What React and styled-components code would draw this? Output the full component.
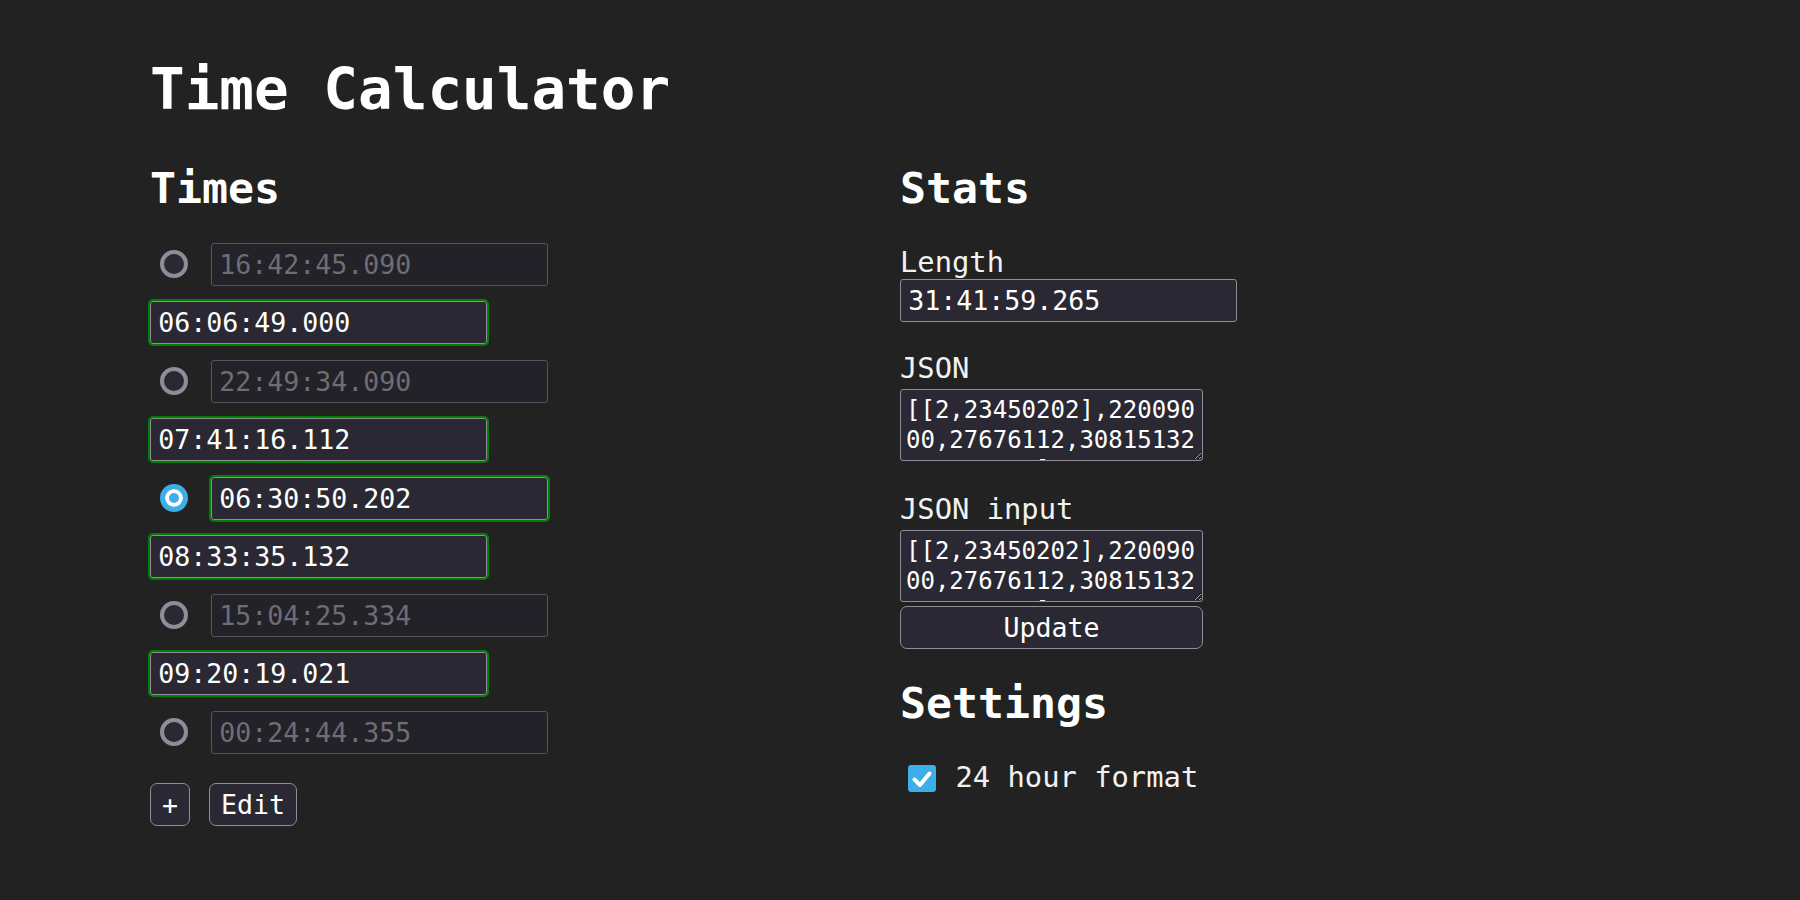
import React from "react";
import styled, { createGlobalStyle } from "styled-components";

// Cores tiradas da tela
const BG = "#222222";
const FIELD_BG = "#2a2933";
const FIELD_BG_OFF = "#232228";
const BORDER = "#8f8d98";
const BORDER_OFF = "#55545c";
const TEXT_OFF = "#6e6d75";
const ACCENT = "#3daee9";

const GlobalStyle = createGlobalStyle`
  html, body {
    margin: 0;
    background: ${BG};
  }
  body {
    font-family: "DejaVu Sans Mono", monospace;
    color: #ffffff;
  }
  * { box-sizing: border-box; }
`;

const Page = styled.main`
  padding: 55.8px 0 0 150px;
  min-height: 900px;
`;

const Title = styled.h1`
  margin: 0;
  font-size: 57.6px;
  line-height: 67px;
  font-weight: bold;
`;

const Columns = styled.div`
  margin-top: 40.4px;
  display: grid;
  grid-template-columns: 750px 1fr;
`;

const Column = styled.section`
  display: flex;
  flex-direction: column;
  align-items: flex-start;
`;

const SectionTitle = styled.h2`
  margin: ${(p) => p.$top || 0}px 0 0;
  font-size: 43.2px;
  line-height: 50px;
  font-weight: bold;
`;

/* ---------- lista de tempos ---------- */

const TimeList = styled.div`
  margin-top: 29.8px;
  display: flex;
  flex-direction: column;
  gap: 15.5px;
`;

const TimeRow = styled.div`
  display: flex;
  align-items: center;
  height: 43px;
`;

const Radio = styled.input.attrs({ type: "radio" })`
  appearance: none;
  margin: 0 23px 0 10px;
  width: 28px;
  height: 28px;
  border-radius: 50%;
  border: 4.5px solid ${BORDER};
  background: ${FIELD_BG};

  &:checked {
    border: 5px solid ${ACCENT};
    background: ${ACCENT};
    box-shadow: inset 0 0 0 4px #ffffff;
  }
`;

const TimeInput = styled.input`
  width: 337px;
  height: 43px;
  padding: 0 5px 0 7.2px;
  border: 1.8px solid ${BORDER};
  border-radius: 3px;
  background: ${FIELD_BG};
  color: #ffffff;
  font-family: "DejaVu Sans Mono", monospace;
  font-size: 26.6px;
  outline: ${(p) => (p.$marked ? "2px solid #008000" : "none")};

  &:disabled {
    border-color: ${BORDER_OFF};
    background: ${FIELD_BG_OFF};
    color: ${TEXT_OFF};
  }
`;

const ButtonRow = styled.div`
  margin-top: 29px;
  display: flex;
  gap: 19px;
`;

const Button = styled.button`
  height: ${(p) => p.$h || 43}px;
  width: ${(p) => (p.$wide ? "303px" : "auto")};
  margin-top: ${(p) => p.$top || 0}px;
  padding: 0 11px;
  border: 1.8px solid ${BORDER};
  border-radius: 7px;
  background: ${FIELD_BG};
  color: #ffffff;
  font-family: "DejaVu Sans Mono", monospace;
  font-size: 26.6px;
`;

/* ---------- stats ---------- */

const Label = styled.label`
  display: block;
  margin-top: ${(p) => p.$top || 0}px;
  font-size: 28.8px;
  line-height: 33px;
  color: #f2f2f2;
`;

const JsonBox = styled.textarea`
  margin-top: ${(p) => p.$top || 0}px;
  width: 303px;
  height: 72px;
  padding: 4.6px 3px 3.6px 5px;
  border: 1.8px solid ${BORDER};
  border-radius: 3px;
  background: ${FIELD_BG};
  color: #ffffff;
  font-family: "DejaVu Sans Mono", monospace;
  font-size: 24px;
  line-height: 30px;
  overflow: hidden;
  resize: both;
  overflow-wrap: anywhere;
  outline: none;
`;

/* ---------- settings ---------- */

const CheckRow = styled.label`
  margin-top: 32.6px;
  display: flex;
  align-items: flex-start;
  gap: 20px;
  font-size: 28.8px;
  line-height: 33px;
  color: #f2f2f2;
`;

const CheckBox = styled.span`
  margin: 4.4px 0 0 8px;
  width: 27.5px;
  height: 27.5px;
  border-radius: 3px;
  background: ${ACCENT};
  display: flex;
  align-items: center;
  justify-content: center;
`;

const times = [
  { value: "16:42:45.090", radio: true },
  { value: "06:06:49.000" },
  { value: "22:49:34.090", radio: true },
  { value: "07:41:16.112" },
  { value: "06:30:50.202", radio: true, checked: true },
  { value: "08:33:35.132" },
  { value: "15:04:25.334", radio: true },
  { value: "09:20:19.021" },
  { value: "00:24:44.355", radio: true },
];

const json = "[[2,23450202],22009000,27676112,30815132,33619021]";

export default function App() {
  return (
    <>
      <GlobalStyle />
      <Page>
        <Title>Time Calculator</Title>
        <Columns>
          <Column>
            <SectionTitle>Times</SectionTitle>
            <TimeList>
              {times.map((t, i) =>
                t.radio ? (
                  <TimeRow key={i}>
                    <Radio name="pick" defaultChecked={t.checked} readOnly />
                    <TimeInput
                      defaultValue={t.value}
                      disabled={!t.checked}
                      $marked={t.checked}
                    />
                  </TimeRow>
                ) : (
                  <TimeRow key={i}>
                    <TimeInput defaultValue={t.value} $marked />
                  </TimeRow>
                )
              )}
            </TimeList>
            <ButtonRow>
              <Button>+</Button>
              <Button>Edit</Button>
            </ButtonRow>
          </Column>

          <Column>
            <SectionTitle>Stats</SectionTitle>
            <Label $top={33.3}>Length</Label>
            <TimeInput defaultValue="31:41:59.265" readOnly />
            <Label $top={30}>JSON</Label>
            <JsonBox $top={3.5} defaultValue={json} readOnly />
            <Label $top={32.5}>JSON input</Label>
            <JsonBox $top={4} defaultValue={json} />
            <Button $wide $top={4} $h={42.5}>
              Update
            </Button>

            <SectionTitle $top={29}>Settings</SectionTitle>
            <CheckRow>
              <CheckBox>
                <svg width="24" height="24" viewBox="0 0 24 24">
                  <polyline
                    points="4.5,12.5 10,18 19.5,6.5"
                    fill="none"
                    stroke="#ffffff"
                    strokeWidth="4"
                    strokeLinecap="round"
                    strokeLinejoin="round"
                  />
                </svg>
              </CheckBox>
              24 hour format
            </CheckRow>
          </Column>
        </Columns>
      </Page>
    </>
  );
}
